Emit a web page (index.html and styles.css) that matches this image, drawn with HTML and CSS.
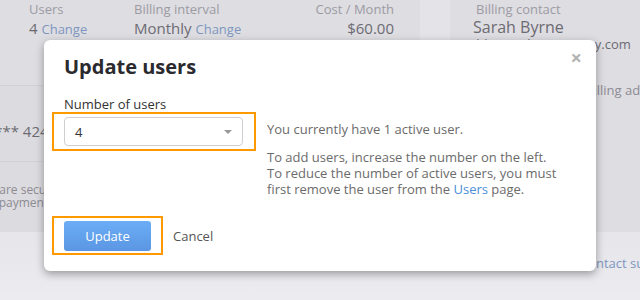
FILE: index.html
```html
<!DOCTYPE html>
<html lang="en">
<head>
    <meta charset="UTF-8">
    <title>Update users</title>
    <link rel="stylesheet" href="styles.css">
</head>
<body>
    <div class="page">
        <div class="main">
            <div class="left">
                <div class="summary">
                    <div class="stat users">
                        <div class="stat-label">Users</div>
                        <div class="stat-value">4 <a class="link">Change</a></div>
                    </div>
                    <div class="stat interval">
                        <div class="stat-label">Billing interval</div>
                        <div class="stat-value">Monthly <a class="link">Change</a></div>
                    </div>
                    <div class="stat cost">
                        <div class="stat-label">Cost / Month</div>
                        <div class="stat-value">$60.00</div>
                    </div>
                </div>
                <div class="middle">
                    <div class="card-row">**** **** **** 4242</div>
                    <div class="secure">
                        <div class="secure-1">Your details are secure</div>
                        <div class="secure-2">with our payment</div>
                    </div>
                </div>
            </div>
            <div class="spacer"></div>
            <div class="contact">
                <div class="stat-label">Billing contact</div>
                <div class="contact-name">Sarah Byrne</div>
                <div class="contact-mail">jbloggs@bigcompany.com</div>
                <div class="contact-addr">Billing address</div>
            </div>
        </div>
        <div class="bottom">
            <a class="link support">Contact support</a>
        </div>
    </div>

    <div class="modal">
        <div class="modal-head">
            <h2>Update users</h2>
            <span class="close">&times;</span>
        </div>
        <div class="modal-body">
            <div class="field">
                <label>Number of users</label>
                <div class="mark">
                    <div class="select">
                        <span>4</span>
                        <span class="caret"></span>
                    </div>
                </div>
            </div>
            <div class="info">
                <p class="current">You currently have 1 active user.</p>
                <p>To add users, increase the number on the left.<br>
                To reduce the number of active users, you must<br>
                first remove the user from the <a class="link">Users</a> page.</p>
            </div>
        </div>
        <div class="modal-foot">
            <div class="mark mark-btn">
                <button class="btn">Update</button>
            </div>
            <a class="cancel">Cancel</a>
        </div>
    </div>
</body>
</html>
```

FILE: styles.css
```css
body {
    margin: 0;
    font-family: "Open Sans", "DejaVu Sans", sans-serif;
    color: #555;
    background: #e8e7ec;
}

.page {
    width: 640px;
    height: 300px;
    overflow: hidden;
    display: flex;
    flex-direction: column;
}

.link {
    color: #7d96bf;
}

.main {
    display: flex;
    height: 232px;
}

.left {
    width: 420px;
    flex-shrink: 0;
    display: flex;
    flex-direction: column;
}

.summary {
    height: 85px;
    background: #dedde2;
    display: flex;
    padding-left: 29px;
}

.stat-label {
    font-size: 13px;
    color: #9c9ba2;
    line-height: 18px;
}

.stat-value {
    font-size: 15px;
    color: #6c6b72;
    line-height: 20px;
}

.stat-value .link {
    font-size: 13px;
}

.users {
    width: 105px;
}

.interval {
    width: 170px;
}

.cost {
    width: 90px;
    text-align: right;
}

.spacer {
    width: 30px;
    flex-shrink: 0;
    background: #e4e3e8;
}

.contact {
    flex: 1;
    min-width: 0;
    overflow: hidden;
    background: #dedde2;
    padding-left: 23px;
    white-space: nowrap;
}

.contact .stat-label {
    padding-left: 3px;
}

.contact-name {
    font-size: 16px;
    color: #6c6b72;
    line-height: 18px;
}

.contact-mail {
    font-size: 13px;
    color: #6c6b72;
    line-height: 17px;
}

.contact-addr {
    font-size: 13px;
    color: #8c8b92;
    margin-top: 28px;
    padding-left: 112px;
}

.middle {
    flex: 1;
    background: #dcdbe0;
    border-top: 1px solid #d2d1d6;
}

.card-row {
    margin-left: -88px;
    height: 75px;
    line-height: 90px;
    font-size: 15px;
    color: #6c6b72;
    border-bottom: 1px solid #d2d1d6;
    width: 200px;
    white-space: nowrap;
}

.secure {
    margin-top: 21px;
    font-size: 12px;
    line-height: 13px;
    color: #8c8b92;
    white-space: nowrap;
}

.secure-1 {
    margin-left: -70px;
}

.secure-2 {
    margin-left: -51px;
}

.bottom {
    flex: 1;
    background: linear-gradient(#e6e5ea, #ecebf0);
    padding-left: 580px;
    padding-top: 22px;
    font-size: 13px;
    white-space: nowrap;
}

.modal {
    position: absolute;
    left: 44px;
    top: 40px;
    width: 552px;
    height: 231px;
    box-sizing: border-box;
    background: #fff;
    border-radius: 6px;
    box-shadow: 0 3px 9px rgba(0, 0, 0, 0.35);
    padding: 14px 20px 0;
}

.modal-head {
    display: flex;
    justify-content: space-between;
    align-items: flex-start;
}

.modal-head h2 {
    margin: 0;
    font-size: 20px;
    line-height: 26px;
    font-weight: 700;
    color: #2a2a2f;
}

.close {
    font-size: 20px;
    line-height: 14px;
    font-weight: 700;
    color: #b3b3b3;
    margin-right: -6px;
    margin-top: -3px;
}

.modal-body {
    display: flex;
    margin-top: 15px;
}

.field label {
    display: block;
    font-size: 13px;
    line-height: 18px;
    color: #333;
    margin-bottom: 4px;
}

.mark {
    position: relative;
}

.mark::after {
    content: "";
    position: absolute;
    top: -5px;
    bottom: -5px;
    left: -12px;
    right: -13px;
    border: 2px solid #ff9900;
}

.mark-btn::after {
    bottom: -4px;
    right: -12px;
}

.select {
    width: 179px;
    height: 29px;
    box-sizing: border-box;
    border: 1px solid #cfcfcf;
    border-radius: 4px;
    display: flex;
    align-items: center;
    justify-content: space-between;
    padding: 0 10px;
    font-size: 13px;
    color: #333;
}

.caret {
    width: 0;
    height: 0;
    border-left: 4px solid transparent;
    border-right: 4px solid transparent;
    border-top: 4px solid #999;
}

.info {
    margin-left: 24px;
    padding-top: 26px;
    font-size: 13px;
    line-height: 16px;
    color: #6b6b6b;
}

.info p {
    margin: 0;
}

.info .current {
    margin-bottom: 12px;
}

.info .link {
    color: #4a8fd9;
}

.modal-foot {
    display: flex;
    align-items: center;
    margin-top: 24px;
}

.btn {
    width: 87px;
    height: 30px;
    border: none;
    border-radius: 3px;
    background: linear-gradient(#6badf6, #5b96e3);
    color: #fff;
    font-family: inherit;
    font-size: 13px;
    padding: 0;
}

.cancel {
    margin-left: 22px;
    font-size: 13px;
    color: #555;
}
```
